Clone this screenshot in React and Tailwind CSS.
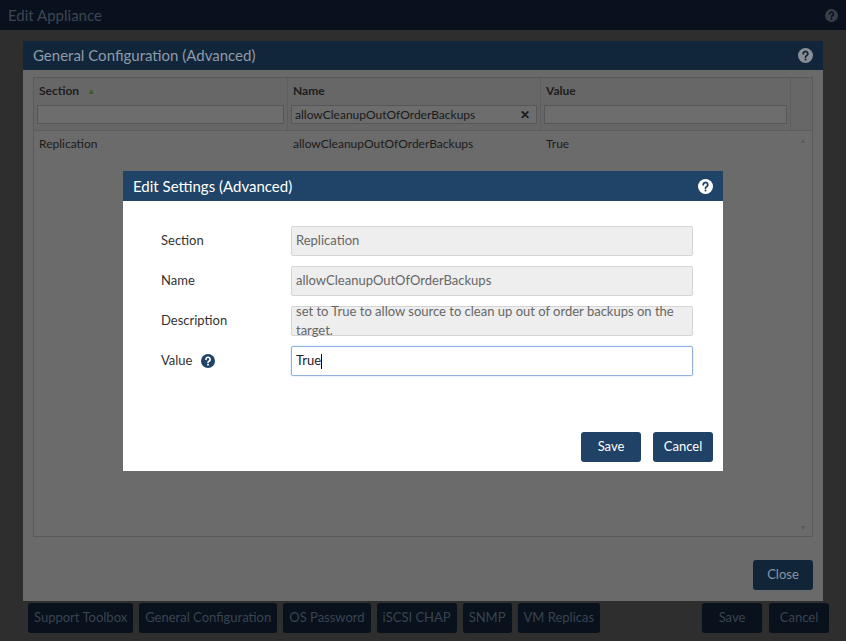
const F = { fontFamily: "Lato, 'Noto Sans', sans-serif" };

function Help({ className }) {
  return (
    <svg className={className} viewBox="0 0 16 16" aria-hidden>
      <circle cx="8" cy="8" r="8" fill="currentColor" />
      <path d="M5.6 6.2a2.4 2.4 0 1 1 3.4 2.1c-.7.4-1 .8-1 1.5" stroke="var(--bg)" strokeWidth="1.9" fill="none" strokeLinecap="round" />
      <circle cx="8" cy="12.3" r="1.1" fill="var(--bg)" />
    </svg>
  );
}

const bottomBtns = ["Support Toolbox", "General Configuration", "OS Password", "iSCSI CHAP", "SNMP", "VM Replicas"];

export default function App() {
  return (
    <div className="relative w-[846px] h-[641px] overflow-hidden bg-[#2e2e2e] text-[13px]" style={F}>
      {/* outer dialog title */}
      <div className="h-[30px] bg-[#08111d] flex items-center justify-between px-2 text-[#3e4652] text-[15px]">
        <span>Edit Appliance</span>
        <Help className="w-[13px] h-[13px] text-[#3a3f47] [--bg:#08111d]" />
      </div>

      {/* general configuration dialog */}
      <div className="absolute left-[23px] top-[41px] w-[800px] h-[560px] bg-[#6a6a6a] flex flex-col">
        <div className="h-[29px] bg-[#12263b] flex items-center justify-between px-[10px] text-[#8f9aa6] text-[15px]">
          <span>General Configuration (Advanced)</span>
          <Help className="w-[15px] h-[15px] text-[#8a8f96] [--bg:#12263b]" />
        </div>
        <div className="mx-[10px] mt-[7px] h-[460px] border border-[#5a5a5a] bg-[#6b6b6b] flex flex-col">
          <div className="flex bg-[#676767] border-b border-[#5d5d5d] h-[53px]">
            {[["Section", 254], ["Name", 253], ["Value", 250]].map(([t, w], i) => (
              <div key={t} className="flex flex-col px-[3px] pt-[4px] border-r border-[#5e5e5e]" style={{ width: w }}>
                <div className="px-[2px] h-[18px] text-[#1d1d1d] font-bold text-[12px] flex items-center gap-2">
                  {t}
                  {i === 0 && <span className="text-[#3f5a1f] text-[8px]">▲</span>}
                </div>
                <div className="mt-[5px] h-[19px] border border-[#575757] bg-[#6d6d6d] flex items-center justify-between px-[3px] text-[#1a1a1a] text-[12px]">
                  {i === 1 && <><span>allowCleanupOutOfOrderBackups</span><span className="font-bold text-[12px] mr-[3px]">✕</span></>}
                </div>
              </div>
            ))}
            <div className="flex-1" />
          </div>
          <div className="flex flex-1">
            <div className="flex-1">
              <div className="flex h-[25px] items-center text-[#1b1b1b] text-[12px]">
                <span className="w-[254px] px-[5px]">Replication</span>
                <span className="w-[253px] px-[5px]">allowCleanupOutOfOrderBackups</span>
                <span className="px-[5px]">True</span>
              </div>
            </div>
            <div className="w-[18px] flex flex-col justify-between items-center text-[#5a5a5a] text-[7px] py-[4px]">
              <span>▲</span><span>▼</span>
            </div>
          </div>
        </div>
        <div className="flex justify-end px-[10px] mt-[23px]">
          <div className="w-[60px] h-[30px] rounded-[3px] bg-[#112539] text-[#8a96a3] flex items-center justify-center text-[13px]">Close</div>
        </div>
      </div>

      {/* bottom bar */}
      <div className="absolute left-[28px] right-[17px] top-[603px] flex gap-[6px] text-[#3a4450] text-[13px]">
        {bottomBtns.map((b) => (
          <div key={b} className="h-[30px] px-[6px] rounded-[3px] bg-[#08111c] flex items-center">{b}</div>
        ))}
        <div className="flex-1" />
        <div className="h-[30px] w-[60px] rounded-[3px] bg-[#08111c] flex items-center justify-center">Save</div>
        <div className="h-[30px] w-[60px] rounded-[3px] bg-[#08111c] flex items-center justify-center ml-[1px]">Cancel</div>
      </div>

      {/* edit settings modal */}
      <div className="absolute left-[123px] top-[171px] w-[600px] h-[300px] bg-white flex flex-col">
        <div className="h-[30px] bg-[#204468] flex items-center justify-between px-[10px] text-white text-[15px]">
          <span>Edit Settings (Advanced)</span>
          <Help className="w-[15px] h-[15px] text-white [--bg:#204468]" />
        </div>
        <div className="flex flex-col gap-[10px] pt-[25px] pl-[38px] pr-[30px]">
          {[["Section", "Replication"], ["Name", "allowCleanupOutOfOrderBackups"], ["Description", "set to True to allow source to clean up out of order backups on the target."]].map(([l, v]) => (
            <div key={l} className="flex items-center">
              <span className="w-[130px] text-[#333] text-[13px]">{l}</span>
              <div className="flex-1 h-[30px] rounded-[2px] border border-[#d4d4d4] bg-[#eeeeee] flex items-center px-[4px] text-[#666] text-[13px]">{v}</div>
            </div>
          ))}
          <div className="flex items-center">
            <span className="w-[130px] text-[#333] text-[13px] flex items-center gap-[8px]">
              Value <Help className="w-[14px] h-[14px] text-[#1f4266] [--bg:#ffffff]" />
            </span>
            <div className="flex-1 h-[30px] rounded-[2px] border border-[#8fb3dd] bg-white flex items-center px-[4px] text-[#222] text-[13px] shadow-[0_0_2px_#b8d0ee]">
              True<span className="w-px h-[15px] bg-black" />
            </div>
          </div>
        </div>
        <div className="flex-1" />
        <div className="flex justify-end gap-[12px] px-[10px] pb-[9px]">
          <div className="w-[60px] h-[30px] rounded-[3px] bg-[#1f4266] text-white flex items-center justify-center text-[13px]">Save</div>
          <div className="w-[60px] h-[30px] rounded-[3px] bg-[#1f4266] text-white flex items-center justify-center text-[13px]">Cancel</div>
        </div>
      </div>
    </div>
  );
}
